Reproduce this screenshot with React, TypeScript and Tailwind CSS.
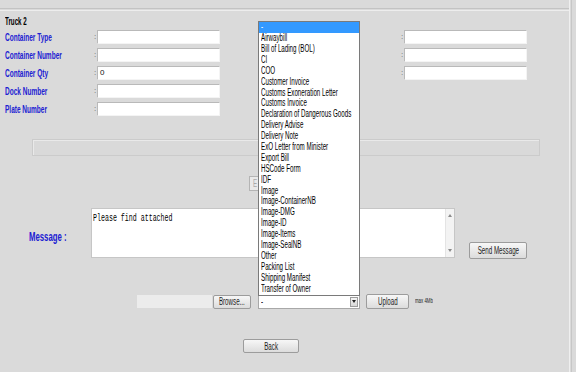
import React from 'react';

// text in the shot is squeezed horizontally, so every run of text gets the same squeeze
const Sq = ({ children, className = '' }: { children: React.ReactNode; className?: string }) => (
  <span className={'inline-block whitespace-nowrap scale-x-[0.62] ' + className}>{children}</span>
);

const docTypes = [
  '-',
  'Airwaybill',
  'Bill of Lading (BOL)',
  'CI',
  'COO',
  'Customer Invoice',
  'Customs Exoneration Letter',
  'Customs Invoice',
  'Declaration of Dangerous Goods',
  'Delivery Advise',
  'Delivery Note',
  'ExO Letter from Minister',
  'Export Bill',
  'HSCode Form',
  'IDF',
  'Image',
  'Image-ContainerNB',
  'Image-DMG',
  'Image-ID',
  'Image-Items',
  'Image-SealNB',
  'Other',
  'Packing List',
  'Shipping Manifest',
  'Transfer of Owner',
];

const leftFields = [
  { label: 'Container Type', value: '' },
  { label: 'Container Number', value: '' },
  { label: 'Container Qty', value: '0' },
  { label: 'Dock Number', value: '' },
  { label: 'Plate Number', value: '' },
];

const Field = ({ value = '' }: { value?: string }) => (
  <div className="w-[123px] h-[14px] bg-white border-t border-l border-[#b9b9b9] border-r border-b border-r-[#f4f4f4] border-b-[#f4f4f4] pl-[2px] text-[8px] leading-[12px] text-[#111] font-['Liberation_Sans_Narrow','Liberation_Sans',sans-serif]">
    {value}
  </div>
);

const Colon = () => (
  <div className="w-[4px] h-[14px] leading-[14px] text-[8px] text-[#666] text-center">:</div>
);

const Btn = ({ label, className = '' }: { label: string; className?: string }) => (
  <div
    className={
      'flex items-center justify-center border border-[#9c9c9c] rounded-[2px] bg-linear-to-b from-[#f7f7f7] to-[#dcdcdc] text-[10px] text-[#222] ' +
      className
    }
  >
    <Sq className="origin-center">{label}</Sq>
  </div>
);

export default function App() {
  return (
    <div className="w-[576px] h-[372px] bg-[#dadada] flex overflow-hidden font-['Liberation_Sans',Arial,sans-serif]">
      <div className="w-[569px] flex flex-col">
        {/* top rule */}
        <div className="mt-[8px] h-px bg-[#c3c3c3]" />
        <div className="mt-px h-px bg-[#ededed]" />

        <div className="mt-[5px] h-[12px] leading-[12px] pl-[5px] text-[10px] font-bold text-black">
          <Sq className="origin-left">Truck 2</Sq>
        </div>

        {/* truck fields */}
        <div className="mt-[2px] flex">
          <div className="w-[220px] flex flex-col">
            {leftFields.map((f) => (
              <div key={f.label} className="flex h-[18px]">
                <div className="w-[93px] pl-[5px] h-[14px] leading-[14px] text-[10.5px] font-bold text-[#2020d2]">
                  <Sq className="origin-left">{f.label}</Sq>
                </div>
                <Colon />
                <Field value={f.value} />
              </div>
            ))}
          </div>
          <div className="ml-[180px] flex flex-col">
            {[0, 1, 2].map((i) => (
              <div key={i} className="flex h-[18px]">
                <Colon />
                <Field />
              </div>
            ))}
          </div>
        </div>

        <div className="mt-[19px] ml-[32px] w-[508px] h-[17px] border border-[#cbcbcb] shadow-[inset_1px_1px_0_#e9e9e9] bg-[#d9d9d9]" />

        {/* button mostly hidden under the open list */}
        <div className="mt-[20px] ml-[249px] w-[9px] h-[15px] border border-r-0 border-[#b4b4b4] bg-[#e9e9e9] text-[10px] leading-[13px] text-[#a8a8a8] pl-[3px]">
          <Sq className="origin-left">E</Sq>
        </div>

        {/* message */}
        <div className="mt-[17px] flex items-start">
          <div className="w-[91px] pl-[29px] pt-[22px] leading-[14px] text-[12.5px] font-bold text-[#2020d2]">
            <Sq className="origin-left">Message :</Sq>
          </div>
          <div className="w-[364px] h-[50px] bg-white border border-[#c6c6c6] flex">
            <div className="flex-1 pl-[1px] pt-[3px] text-[10.7px] leading-[12px] font-['Liberation_Mono','Courier_New',monospace] text-black">
              <Sq className="origin-left">Please find attached</Sq>
            </div>
            <div className="w-[9px] bg-[#f3f3f3] border-l border-[#e4e4e4] flex flex-col justify-between items-center py-[5px]">
              <svg width="4" height="3" viewBox="0 0 4 3">
                <path d="M2 0 L4 3 L0 3 Z" fill="#8a8a8a" />
              </svg>
              <svg width="4" height="3" viewBox="0 0 4 3">
                <path d="M0 0 L4 0 L2 3 Z" fill="#8a8a8a" />
              </svg>
            </div>
          </div>
          <Btn label="Send Message" className="ml-[14px] mt-[34px] w-[58px] h-[17px]" />
        </div>

        {/* upload row */}
        <div className="mt-[35px] flex items-center h-[15px]">
          <div className="ml-[137px] w-[75px] h-[13px] bg-[#ececec]" />
          <Btn label="Browse..." className="ml-[1px] w-[38px] h-[14px]" />
          <div className="relative ml-[7px] w-[102px] h-[14px] bg-white border border-[#a8a8a8] flex">
            <div className="flex-1 pl-[2px] text-[10px] leading-[12px] text-black">
              <Sq className="origin-left">-</Sq>
            </div>
            <div className="w-[8px] my-px mr-px bg-linear-to-b from-[#f5f5f5] to-[#d8d8d8] border border-[#9d9d9d] flex items-center justify-center">
              <svg width="4" height="3" viewBox="0 0 4 3">
                <path d="M0 0 L4 0 L2 3 Z" fill="#222" />
              </svg>
            </div>

            {/* open drop-down list */}
            <div className="absolute left-[-1px] bottom-full w-[102px] bg-white border border-[#7a7a7a] overflow-hidden">
              {docTypes.map((d, i) => (
                <div
                  key={d}
                  className={
                    'h-[10.9px] leading-[10.9px] pl-[2px] text-[10px] ' +
                    (i === 0 ? 'bg-[#3399ff] text-white' : 'text-black')
                  }
                >
                  <Sq className="origin-left">{d}</Sq>
                </div>
              ))}
            </div>
          </div>
          <Btn label="Upload" className="ml-[6px] w-[43px] h-[15px]" />
          <div className="ml-[6px] text-[7px] text-[#222]">
            <Sq className="origin-left">max 4Mb</Sq>
          </div>
        </div>

        <Btn label="Back" className="mt-[30px] ml-[243px] w-[56px] h-[14px]" />
      </div>

      {/* right frame edge */}
      <div className="w-px bg-[#efefef]" />
      <div className="w-px" />
      <div className="w-px bg-[#c7c7c7]" />
    </div>
  );
}
